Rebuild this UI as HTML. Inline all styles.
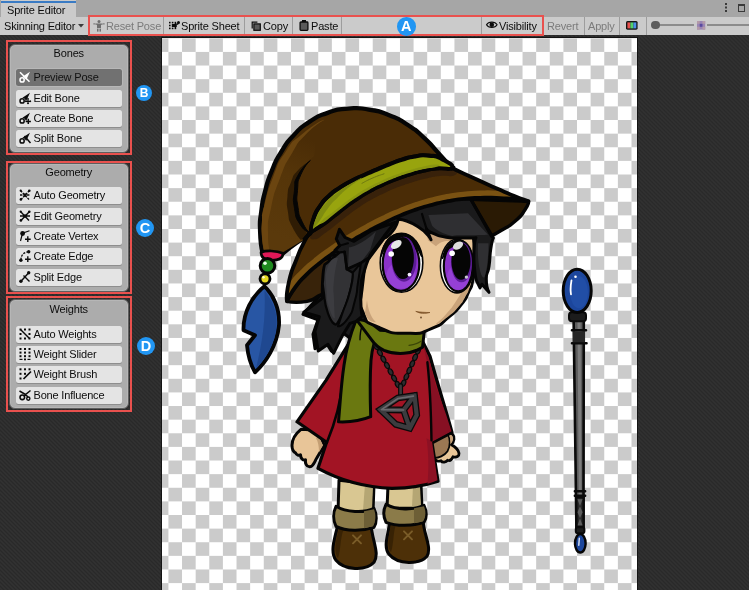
<!DOCTYPE html>
<html><head><meta charset="utf-8">
<style>
*{box-sizing:border-box;margin:0;padding:0}
html,body{width:749px;height:590px;overflow:hidden}
body{font-family:"Liberation Sans",sans-serif;font-size:11px;letter-spacing:-0.18px;color:#0c0c0c;position:relative;
 background:#2d2d2d repeating-linear-gradient(45deg,#292929 0,#323232 1.414px,#292929 2.828px);}
.abs{position:absolute}
#tabbar{left:0;top:0;width:749px;height:17px;background:#a6a6a6}
#tab{left:1px;top:0;width:75px;height:17px;background:#cbcbcb;}
#tab i{position:absolute;left:0;top:1px;width:75px;height:1.8px;background:#3a7bc4}
#tab span{position:absolute;left:5.5px;top:3.5px;line-height:13px}
#toolbar{left:0;top:16.9px;width:749px;height:18px;background:#cbcbcb}
.tb,.btn,.panel h4,#tab span,.badge{will-change:transform}
.tb{position:absolute;top:17.6px;height:17px;line-height:17px;white-space:nowrap}
.dis{color:#7b7b7b}
.sep{position:absolute;top:17px;width:1px;height:17.8px;background:#9d9d9d}
.red{position:absolute;border:2.1px solid #e9514e}
#canvas{left:162px;top:37.7px;width:475.3px;height:553px;background:#fff;overflow:hidden;box-shadow:0 0 0 1px #141414}
.panel{position:absolute;left:9px;width:119.5px;background:#acacac;border:1.6px solid #5e5e5e;border-radius:6px;box-shadow:inset 0 0 0 1px #b6b6b6}
.panel h4{font-weight:normal;font-size:11px;text-align:center;position:absolute;left:0;right:0;top:2.8px;line-height:13px}
.btn{position:absolute;left:16px;width:106px;height:16.8px;background:#e4e4e4;border-radius:2.5px;box-shadow:0 1px 0 #8e8e8e;line-height:16.6px;padding-left:17.5px;white-space:nowrap}
.btn.sel{background:#717171;box-shadow:0 0 0 1px #b7b7b7;color:#111}
.btn svg{position:absolute;left:2.6px;top:2.4px;width:12px;height:12px;overflow:visible}
.badge{position:absolute;border-radius:50%;background:#2196f3;color:#fff;font-weight:bold;text-align:center;letter-spacing:0}
svg.ic{position:absolute;overflow:visible}
</style></head><body>
<div id="tabbar" class="abs"></div>
<div id="tab" class="abs"><i></i><span>Sprite Editor</span></div>
<div id="toolbar" class="abs"></div>
<div class="tb" style="left:3.7px">Skinning Editor</div>
<svg class="ic" style="left:78px;top:24px" width="6" height="4" viewBox="0 0 6 4"><path d="M0 0 H6 L3 3.600 Z" fill="#3c3c3c"/></svg>
<svg class="ic" style="left:93px;top:19.800px" width="12" height="12" viewBox="0 0 12 12"><g fill="#6f6f6f"><circle cx="6" cy="1.600" r="1.500"/><rect x="0.300" y="3.400" width="2" height="1"/><rect x="9.700" y="3.400" width="2" height="1"/><path d="M2.500 3.600 H9.500 V4.800 H8 V8 H4 V4.800 H2.500 Z"/><rect x="4" y="8.600" width="1.500" height="3"/><rect x="6.500" y="8.600" width="1.500" height="3"/></g></svg>
<div class="tb dis" style="left:105.8px">Reset Pose</div>
<div class="sep" style="left:163px"></div>
<svg class="ic" style="left:169px;top:21.300px" width="11" height="9" viewBox="0 0 11 9"><g fill="#0c0c0c"><rect x="0" y="0.800" width="1.600" height="1.600"/><rect x="0" y="3.700" width="1.600" height="1.600"/><rect x="0" y="6.600" width="1.600" height="1.600"/><rect x="2.800" y="0.800" width="1.600" height="1.600"/><rect x="2.800" y="6.600" width="1.600" height="1.600"/><rect x="2.800" y="3" width="5" height="3"/><rect x="5.600" y="0.800" width="1.600" height="2.300"/><rect x="5.600" y="6" width="1.600" height="2.200"/><circle cx="9.500" cy="1.500" r="1.500"/><rect x="7.500" y="2.200" width="1.800" height="1.600"/></g></svg>
<div class="tb" style="left:181.2px">Sprite Sheet</div>
<div class="sep" style="left:244px"></div>
<svg class="ic" style="left:251px;top:20.800px" width="10" height="10" viewBox="0 0 10 10"><path d="M0.600 0.600 H6.400 V1.800 H1.800 V7.400 H0.600 Z" fill="#0c0c0c"/><rect x="2.900" y="2.900" width="6.400" height="6.400" fill="#5a5a5a" stroke="#0c0c0c" stroke-width="1.200"/></svg>
<div class="tb" style="left:263px">Copy</div>
<div class="sep" style="left:291.700px"></div>
<svg class="ic" style="left:298.500px;top:19.800px" width="10" height="11" viewBox="0 0 10 11"><rect x="3" y="0" width="4" height="2.400" fill="#0c0c0c"/><rect x="1.100" y="2" width="7.800" height="8.400" rx="0.800" fill="#5a5a5a" stroke="#0c0c0c" stroke-width="1.300"/></svg>
<div class="tb" style="left:310.600px">Paste</div>
<div class="sep" style="left:341px"></div>
<div class="sep" style="left:481.300px"></div>
<svg class="ic" style="left:486.300px;top:21.400px" width="11.600" height="7.600" viewBox="0 0 11.600 7.600"><path d="M0.500 3.800 C2.500 0.300 9.100 0.300 11.100 3.800 C9.100 7.300 2.500 7.300 0.500 3.800 Z" fill="#cbcbcb" stroke="#0c0c0c" stroke-width="1.100"/><circle cx="5.800" cy="3.800" r="2.300" fill="#0c0c0c"/></svg>
<div class="tb" style="left:499px">Visibility</div>
<div class="tb dis" style="left:546.800px">Revert</div>
<div class="sep" style="left:583.500px"></div>
<div class="tb dis" style="left:588px">Apply</div>
<div class="sep" style="left:619.200px"></div>
<svg class="ic" style="left:626.400px;top:20.800px" width="11.600" height="8.800" viewBox="0 0 11.600 8.800"><rect x="0" y="0" width="11.600" height="8.800" rx="1.500" fill="#141414"/><rect x="1.400" y="1.400" width="3" height="6" fill="#e8504e"/><rect x="4.400" y="1.400" width="3" height="6" fill="#4fd26a"/><rect x="7.400" y="1.400" width="2.900" height="6" fill="#4a8fe8"/></svg>
<div class="sep" style="left:646.300px"></div>
<div class="abs" style="left:656px;top:24.400px;width:37.500px;height:1.200px;background:#8c8c8c"></div><div class="abs" style="left:651.300px;top:20.800px;width:8.400px;height:8.400px;border-radius:50%;background:#5c5c5c"></div>
<svg class="ic" style="left:696.800px;top:20.800px" width="8.200" height="8.600" viewBox="0 0 8.200 8.600"><rect width="8.200" height="8.600" fill="#9a86b4"/><rect x="0" y="0" width="2.700" height="2.800" fill="#b49aa8"/><rect x="5.500" y="0" width="2.700" height="2.800" fill="#b49aa8"/><rect x="2.700" y="2.800" width="2.800" height="3" fill="#5a4aa0"/><rect x="0" y="5.800" width="2.700" height="2.800" fill="#b49aa8"/><rect x="5.500" y="5.800" width="2.700" height="2.800" fill="#b49aa8"/></svg>
<div class="abs" style="left:707.400px;top:24.400px;width:42px;height:1.200px;background:#8c8c8c"></div>
<div class="abs" style="left:724.900px;top:3.200px;width:1.700px;height:1.700px;background:#3a3a3a;box-shadow:0 3.500px 0 #3a3a3a,0 7px 0 #3a3a3a"></div>
<div class="abs" style="left:737.700px;top:3.600px;width:7.600px;height:8px;border:1px solid #3a3a3a;border-top-width:2.200px"></div>
<div class="red" style="left:88px;top:14.900px;width:456.200px;height:21.200px"></div>
<div class="badge" style="left:397.2px;top:16.7px;width:18.6px;height:18.6px;font-size:14.5px;line-height:19.1px">A</div>

<div id="canvas" class="abs">
<svg width="475.3" height="553" viewBox="162 37.7 475.3 553">
<defs><pattern id="chk" x="154.8" y="38" width="27.24" height="27.24" patternUnits="userSpaceOnUse">
<rect width="27.24" height="27.24" fill="#fff"/><rect width="13.62" height="13.62" fill="#cbcbcb"/><rect x="13.62" y="13.62" width="13.62" height="13.62" fill="#cbcbcb"/></pattern></defs>
<rect x="162" y="37" width="476" height="554" fill="url(#chk)"/>
<g id="char" stroke-linejoin="round" stroke-linecap="round">
<linearGradient id="tailg" gradientUnits="userSpaceOnUse" x1="275" y1="235" x2="312" y2="140"><stop offset="0" stop-color="#5a390b"/><stop offset="0.6" stop-color="#553509"/><stop offset="1" stop-color="#4a2c06"/></linearGradient>
<!--staff--><!-- staff -->
<g id="staff">
<path d="M573.6 318 L583.8 318 L583.5 528 L576.4 528 Z" fill="#5c5c5c" stroke="#0a0a0a" stroke-width="2.6"/>
<path d="M577.5 322 L580.5 322 L581.6 496 L578.8 496 Z" fill="#7c7c7c"/>
<path d="M576.2 497 L583.6 497 L583.6 527 L576.5 527 Z" fill="#2a2a2a" stroke="#0a0a0a" stroke-width="2.4"/>
<path d="M577.500 499 L582.500 499 L580 506 Z M580 506 L582.600 512 L580 518 L577.500 512 Z M580 518 L582.500 525 L577.600 525 Z" fill="#5d5d5d"/>
<rect x="569" y="312" width="17" height="9" rx="3" fill="#1c1c1c" stroke="#0a0a0a" stroke-width="2"/>
<path d="M572 330 H586 M572 343 H586.5" stroke="#0a0a0a" stroke-width="2.6" fill="none"/>
<rect x="573" y="331" width="12" height="11" fill="#262626"/>
<path d="M574.8 491 H585.2 M574.8 495.5 H585.2" stroke="#0a0a0a" stroke-width="2.4" fill="none"/>
<rect x="575.8" y="527" width="8.600" height="6" rx="2" fill="#1c1c1c" stroke="#0a0a0a" stroke-width="2"/>
<ellipse cx="577.2" cy="290.5" rx="14" ry="21.6" fill="#1c469c" stroke="#060606" stroke-width="3"/>
<ellipse cx="579" cy="292" rx="9" ry="16" fill="#2553ae" opacity=".6"/>
<path d="M571.5 280 Q570 288 571 294" stroke="#fff" stroke-width="1.8" fill="none"/>
<circle cx="575.5" cy="276.5" r="1.3" fill="#fff"/>
<ellipse cx="580.3" cy="543" rx="5.3" ry="9.2" fill="#1c469c" stroke="#060606" stroke-width="2.4"/>
<path d="M579.3 538 L578.8 545" stroke="#dfe6f5" stroke-width="1.4"/>
</g>


<path d="M330 255 L321 294 L303 314 L318 319.5 L313 334 L315 348.5 L325 341 L331.5 351 L341 331 L350 338 L366 322 L380 300 L380 250 L330 255 Z" fill="#1a1a1b" stroke="#050505" stroke-width="3"/>
<path d="M528.5 201 C528.5 201 529.5 202.8 525 209.5 C520.5 216.2 522.8 214.2 515 221 C507.2 227.8 509.5 225.2 501.5 230 C493.5 234.8 491 235.5 491 235.5 L440 240 L420 215 L440 198 L528.5 201 Z" fill="#2a1a04" stroke="#050505" stroke-width="3.4"/>
<!--feather--><!-- feather -->
<path id="feather" d="M264.5 286 C252 296 243 312 243.5 330 L255 335 L247 345 C248 356 251 365 255 372 C266 362 277 345 279 325 C280 308 273 294 264.5 286 Z" fill="#2856a4" stroke="#050505" stroke-width="3.8"/>
<path d="M264.5 290 C272 300 278 312 276.5 326 C275 344 266 358 256 368 C262 345 266 318 264.5 290 Z" fill="#1f4890"/>


<!--body--><!-- legs -->
<path d="M339 480 L374 484 L373 512 L338 512 Z" fill="#d9c792" stroke="#050505" stroke-width="3"/>
<path d="M365 484 L373 485 L372 510 L363 510 Z" fill="#b5a674"/>
<path d="M388 486 L421 484 L422 508 L387 508 Z" fill="#d9c792" stroke="#050505" stroke-width="3"/>
<path d="M413 486 L420 486 L421 506 L412 506 Z" fill="#b5a674"/>
<!-- boots -->
<path d="M338 524 C334 540 330 552 336 560 C344 570 366 571 374 562 C380 553 372 540 371 524 Z" fill="#4d3008" stroke="#050505" stroke-width="3"/>
<path d="M390 520 C388 536 383 546 389 554 C398 565 420 564 427 556 C432 547 424 535 423 520 Z" fill="#4d3008" stroke="#050505" stroke-width="3"/>
<path d="M339 528 C336 540 333 551 338 558 C341 548 340 538 344 528 Z" fill="#382204"/>
<path d="M391 524 C389 536 386 546 391 552 C394 542 393 532 396 524 Z" fill="#382204"/>
<path d="M353 535 L361 543 M361 535 L353 543 M404 531 L412 539 M412 531 L404 539" stroke="#7a5c28" stroke-width="1.900" fill="none"/>
<!-- cuffs -->
<path d="M336 506 C346 512 364 513 374 508 C377 514 377 522 374 527 C362 531 346 531 336 526 C333 520 333 512 336 506 Z" fill="#8b7b49" stroke="#050505" stroke-width="3"/>
<path d="M364 511 L374 509 C376 514 376 521 373 526 L364 528 Z" fill="#6d5f36"/>
<path d="M386 504 C396 510 414 510 424 505 C427 511 427 518 424 522 C412 526 396 526 386 522 C383 516 383 510 386 504 Z" fill="#8b7b49" stroke="#050505" stroke-width="3"/>
<path d="M414 508 L424 506 C426 511 426 517 423 521 L414 523 Z" fill="#6d5f36"/>

<!-- hands -->
<path d="M301 429 C296 433 292 439 292 445 C292 449 293 451.500 295.500 452.500 C296.500 455 299 455.500 300.500 454.500 C300.500 458 303 460.500 305.500 459.500 C305 463 306.500 466.500 309.500 466.500 C312 466.500 313.500 464 314.500 462 C317 457 320.500 451.500 324.500 445 L318 430 Z" fill="#e8c598" stroke="#050505" stroke-width="3"/><path d="M318 436 L323 445 L319 452 C319 446 318 441 316 438 Z" fill="#c49f74"/>
<path d="M448 433 C452 432 454.500 435 454 439 C453.500 441.500 452.500 443.500 451.500 444.500 C455 446.500 458.500 450 459 453 C459.300 456 456.500 457.500 453 456.500 C452 459 450 461 447.500 460 C446 462 442.500 462.500 441 460.500 C438.500 461.500 435.500 460.500 434.500 458 L431 441 Z" fill="#e9c698" stroke="#050505" stroke-width="2.800"/>
<path d="M431.500 441 C437 440 444 436.500 447.500 433.500 C450.500 438 450.500 446 447.500 451 C444.500 455.500 438.500 458 433.500 457.500 Z" fill="#9b7753" stroke="#050505" stroke-width="1.800"/>
<path d="M449 434.500 C452 434 453.500 436.500 453 439.500 C452.500 441.500 451.500 443 450.500 443.800 C450.500 440 450 437 449 434.500 Z" fill="#c9a37a"/>
<!-- dress -->
<path id="dress" d="M352 338 L326 380 L297 421.5 L326.6 442 L318 468 C340 480 366 487 392 488 C410 488 426 485 438 481 L432 442.5 L452 432 C446 410 438 385 430 356 L422 340 Z" fill="#a21424" stroke="#050505" stroke-width="3.2"/>
<path d="M423 343 L430 362 L436 386 L446 414 L451.500 431 L432 441.500 C431.500 415 430 388 427 362 Z" fill="#871023"/><path d="M432 441 L437.500 480 C434 481.500 431 482.500 427.500 483.500 C429 468 428.500 452 426.500 438 Z" fill="#8c1124"/>
<path d="M427.4 362 C430 385 431 410 431.5 440" stroke="#050505" stroke-width="2.4" fill="none"/>
<path d="M343 380 C341 400 334 425 327 442" stroke="#050505" stroke-width="2.6" fill="none"/>

<!-- scarf hanging -->
<path d="M356 320 C350 335 346 350 344 365 C341 385 340 405 338.5 421.5 C350 422 362 420 370.7 416.4 C370 395 370 375 371 360 C372 348 375 338 380 330 Z" fill="#6a7810" stroke="#050505" stroke-width="3"/>
<path d="M362 326 C360.500 330 360 335 360 339.500" stroke="#050505" stroke-width="1.400" fill="none"/>
<!-- necklace -->
<path d="M375.5 345 L399 387 M419 349 L402.500 385" stroke="#0a0a0a" stroke-width="1.6" fill="none"/>
<ellipse cx="376.3" cy="346.2" rx="3.3" ry="2.1" transform="rotate(61 376.3 346.2)" fill="#2c2c2e" stroke="#0a0a0a" stroke-width="1.2"/>
<ellipse cx="379.9" cy="352.5" rx="3.3" ry="2.1" transform="rotate(61 379.9 352.5)" fill="#2c2c2e" stroke="#0a0a0a" stroke-width="1.2"/>
<ellipse cx="383.4" cy="358.9" rx="3.3" ry="2.1" transform="rotate(61 383.4 358.9)" fill="#2c2c2e" stroke="#0a0a0a" stroke-width="1.2"/>
<ellipse cx="387.0" cy="365.2" rx="3.3" ry="2.1" transform="rotate(61 387.0 365.2)" fill="#2c2c2e" stroke="#0a0a0a" stroke-width="1.2"/>
<ellipse cx="390.6" cy="371.6" rx="3.3" ry="2.1" transform="rotate(61 390.6 371.6)" fill="#2c2c2e" stroke="#0a0a0a" stroke-width="1.2"/>
<ellipse cx="394.1" cy="378.0" rx="3.3" ry="2.1" transform="rotate(61 394.1 378.0)" fill="#2c2c2e" stroke="#0a0a0a" stroke-width="1.2"/>
<ellipse cx="397.7" cy="384.3" rx="3.3" ry="2.1" transform="rotate(61 397.7 384.3)" fill="#2c2c2e" stroke="#0a0a0a" stroke-width="1.2"/>
<ellipse cx="418.0" cy="350.7" rx="3.3" ry="2.1" transform="rotate(114 418.0 350.7)" fill="#2c2c2e" stroke="#0a0a0a" stroke-width="1.2"/>
<ellipse cx="415.1" cy="357.1" rx="3.3" ry="2.1" transform="rotate(114 415.1 357.1)" fill="#2c2c2e" stroke="#0a0a0a" stroke-width="1.2"/>
<ellipse cx="412.2" cy="363.5" rx="3.3" ry="2.1" transform="rotate(114 412.2 363.5)" fill="#2c2c2e" stroke="#0a0a0a" stroke-width="1.2"/>
<ellipse cx="409.3" cy="370.0" rx="3.3" ry="2.1" transform="rotate(114 409.3 370.0)" fill="#2c2c2e" stroke="#0a0a0a" stroke-width="1.2"/>
<ellipse cx="406.4" cy="376.4" rx="3.3" ry="2.1" transform="rotate(114 406.4 376.4)" fill="#2c2c2e" stroke="#0a0a0a" stroke-width="1.2"/>
<ellipse cx="403.5" cy="382.8" rx="3.3" ry="2.1" transform="rotate(114 403.5 382.8)" fill="#2c2c2e" stroke="#0a0a0a" stroke-width="1.2"/>
<!-- pendant -->
<g id="pendant" stroke-linejoin="miter">
<path d="M400.6 385 L400.6 396" stroke="#0a0a0a" stroke-width="5"/><path d="M400.6 385.500 L400.6 395" stroke="#3a3a3c" stroke-width="2.6"/>
<path d="M380.4 409.3 L397.9 397.7 L414.5 395.3 L416.7 414.7 L409.8 427.9 L395.9 424.1 Z M403.6 409.7 L380.4 409.3 M403.6 409.7 L414.5 395.3 M403.6 409.7 L409.8 427.9" fill="none" stroke="#0a0a0a" stroke-width="6.8"/>
<path d="M380.4 409.3 L397.9 397.7 L414.5 395.3 L416.7 414.7 L409.8 427.9 L395.9 424.1 Z M403.6 409.7 L380.4 409.3 M403.6 409.7 L414.5 395.3 M403.6 409.7 L409.8 427.9" fill="none" stroke="#3c3c3f" stroke-width="4.200"/>
<path d="M381.4 409.3 L397.9 398.2 L413.5 395.8 M403.6 409.7 L382.4 409.3" fill="none" stroke="#6a6a6e" stroke-width="1.600"/>
</g>
<!-- scarf neck -->
<path d="M357 320 C362 318 372 322 380 330 C395 331 410 331 424.500 329 L422.500 347 C412 354 396 355 384 350 C378 347 374 343 372 340 Z" fill="#6a7810" stroke="#050505" stroke-width="3"/>

<path d="M409 345 C414 344.500 418 343 421 341" stroke="#3a4408" stroke-width="1.200" fill="none"/>

<path d="M372 226 C372 226 365.5 256.3 362.5 285 C359.5 313.7 357.5 298 363 312 C368.5 326 364 320 379 327 C394 334 390.3 332.7 408 333 C425.7 333.3 418.3 333.5 432 328 C445.7 322.5 439.2 324.5 449 316.5 C458.8 308.5 455 312.2 461.5 304 C468 295.8 464.7 300 468.5 292 C472.3 284 470.8 290 472.8 280 C474.8 270 474.4 278 474.5 262 C474.6 246 473 232 473 232 L420 208 L395 208 L372 226 Z" fill="#e9c699" stroke="#050505" stroke-width="3"/>
<path d="M473 272 C473 272 472.7 277.7 470 286 C467.3 294.3 468.7 290.3 465 297 C461.3 303.7 464.7 299.5 459 306 C453.3 312.5 455.7 310.5 448 316.5 C440.3 322.5 436.7 324.8 436 324 C435.3 323.2 439.3 321.7 446 314 C452.7 306.3 450.3 309.7 456 301 C461.7 292.3 459 296.7 463 288 C467 279.3 464.7 280.3 468 275 C471.3 269.7 473 272 473 272 Z" fill="#c9a37a"/>
<path d="M367 300 C368 308 370 316 376 322 C370 322 366 318 365 312 Z" fill="#c9a37a"/>
<path d="M416.2 311.2 C420 313.6 425 313.4 430 312.2 C425 312.2 420 311.8 416.2 311.2 Z" fill="#7d5226" stroke="#7d5226" stroke-width="0.7"/><circle cx="421" cy="317.2" r="0.9" fill="#6b4a2a"/>
<!--eyes--><g id="eyes">
<path d="M426 231 L448 231 L452 241 C446 240 440 241 436 246 L428 240 Z" fill="#c9a37a"/>
<ellipse cx="401.5" cy="262.5" rx="21.3" ry="29.5" fill="#fff" stroke="#050505" stroke-width="1.6"/>
<ellipse cx="401" cy="263.6" rx="18.3" ry="27" fill="#8a32c8" stroke="#050505" stroke-width="2.2"/>
<path d="M381 256 C384 240 392 233.500 401 233.500 C411 233.500 419 241 421.500 256 C417 244 410 239 401 239 C392 239 385 245 381 256 Z" fill="#050505" stroke="#050505" stroke-width="1.5"/>
<ellipse cx="401" cy="275" rx="14.5" ry="13.5" fill="#9d4ade" opacity=".6"/>
<ellipse cx="404" cy="259" rx="12.5" ry="22.5" fill="#5c1c96"/>
<ellipse cx="402.900" cy="257.700" rx="11" ry="21" fill="#050505"/>
<ellipse cx="396.300" cy="244.200" rx="6" ry="3.6" transform="rotate(-35 396.300 244.200)" fill="#e6e6e6"/>
<circle cx="391.200" cy="253.700" r="2.800" fill="#fff"/>
<circle cx="409.500" cy="274.300" r="1.900" fill="#f4ecff"/>
<ellipse cx="457" cy="265.800" rx="16.600" ry="26.800" fill="#fff" stroke="#050505" stroke-width="1.6"/>
<ellipse cx="458.200" cy="266" rx="14.400" ry="25" fill="#8a32c8" stroke="#050505" stroke-width="2.200"/>
<path d="M442.500 258 C445 246 451 240 458 240 C466 240 471 246 473 258 C470 249 465 245 458 245 C451 245 446 249 442.500 258 Z" fill="#050505" stroke="#050505" stroke-width="1.500"/>
<ellipse cx="458" cy="277" rx="11" ry="12.5" fill="#9d4ade" opacity=".6"/>
<ellipse cx="461.500" cy="262" rx="10.500" ry="20" fill="#5c1c96"/>
<ellipse cx="461" cy="261" rx="9.500" ry="18.500" fill="#050505"/>
<ellipse cx="458" cy="245.300" rx="5.500" ry="3.500" transform="rotate(-30 458 245.300)" fill="#dcdcdc"/>
<circle cx="452.100" cy="253" r="2.800" fill="#fff"/>
<circle cx="466.400" cy="276.800" r="1.700" fill="#c8c8d0"/>
</g>

<path d="M360 226 L369 258 L384 238 C384 238 388.1 236.9 392.8 230.6 C397.5 224.3 398 219 398 219 C398 219 406.7 219.4 417.7 226.2 C428.7 233 431 239.5 431 239.5 L426.6 228.8 C426.6 228.8 427.3 230.6 433.8 233.3 C440.3 236 436.1 235.4 446.2 236.9 C456.3 238.4 454.1 237.5 464 237.7 C473.9 237.9 476 237.5 476 237.5 C476 237.5 474.4 239.2 474 250 C473.6 260.8 473.6 259 474.7 269.8 C475.8 280.6 477.4 282.3 477.4 282.3 L480 287.6 L481.9 284 L489 292 C489 292 486.3 287.3 486.3 278.7 C486.3 270.1 487.5 276.3 489 266.2 C490.5 256.1 489.3 257.9 490.8 248.4 C492.3 238.9 493.4 237.7 493.4 237.7 L470.8 199 L400 196 L360 226 Z" fill="#1a1a1b" stroke="#050505" stroke-width="3"/>
<path d="M428.4 214.6 L468 213 L488 234.5 C488 234.5 475.9 235.2 462 235 C448.1 234.8 456.2 237.2 446.2 234 C436.2 230.8 432 225.3 432 225.3 L428.4 214.6 Z" fill="#2f2f32"/>
<path d="M478 243 L488.5 243 C488.5 243 488.8 250.7 487.5 262 C486.2 273.3 484.5 277 484.5 277 C484.5 277 481.7 279.3 479.5 268 C477.3 256.7 478 243 478 243 Z" fill="#2f2f32"/>
<path d="M470.8 199 L491.5 236" stroke="#050505" stroke-width="3" fill="none"/>
<path d="M422 213.7 L426.6 228.8" stroke="#050505" stroke-width="2.200" fill="none"/>
<path d="M287 301 C287 301 288.3 296.5 295 287.5 C301.7 278.5 297.5 283.3 307 274 C316.5 264.7 315.7 263.5 323.4 259.5 C331.1 255.5 330 262 330 262 L326 296 C326 296 327 292.8 320.7 294.5 C314.4 296.2 318.2 298.8 307 301 C295.8 303.2 287 301 287 301 Z" fill="#38230a" stroke="#050505" stroke-width="3.4"/>
<clipPath id="bc"><path d="M311 231.5 C315.7 228.4 315.4 229.4 323.2 224.1 C331 218.7 326.9 221.2 334.4 215.4 C341.9 209.6 338 212.3 345.6 206.6 C353.2 200.9 349.3 203.6 357.2 198.4 C365.2 193.2 361.1 195.6 369.5 191 C377.8 186.4 373.6 188.6 382.3 184.6 C391 180.6 386.6 182.4 395.5 179 C404.4 175.7 400 177.2 409 174.4 C418 171.6 413.5 172.7 422.6 170.6 C431.8 168.6 427 169.2 436.5 168.1 C446 167.1 445.8 167.7 451 167.5 C456.2 167.3 452 167.5 452 167.5 C452 167.5 456 169.7 470.8 176.5 C485.6 183.3 481.6 181.5 496.3 188 C511 194.5 504.3 191.7 515 196 C525.7 200.3 528.5 201 528.5 201 C528.5 201 523.3 199.9 512.6 198.8 C501.9 197.7 507.2 198 496.4 197.6 C485.6 197.2 491 197.2 480.1 197.5 C469.3 197.9 474.6 197.5 463.9 198.6 C453.1 199.8 458.5 199 447.8 200.9 C437.2 202.9 442.5 201.7 432.1 204.5 C421.7 207.2 426.8 205.7 416.6 209.1 C406.5 212.5 411.5 210.7 401.6 214.8 C391.6 218.9 396.5 216.7 386.8 221.4 C377.1 226 381.9 223.6 372.4 228.7 C362.9 233.8 367.6 231.2 358.2 236.7 C348.9 242.2 353.5 239.4 344.4 245.3 C335.3 251.2 339.7 248.1 330.9 254.4 C322.1 260.7 326.3 257.3 318 264.2 C309.7 271 313.5 267.3 305.9 274.8 C298.4 282.4 301.7 278.2 295.3 286.9 C289 295.6 287 301 287 301 C287 301 285.8 295 289 281 C292.2 267 291.8 271.3 296.5 259 C301.2 246.7 298.8 252.5 303 244 C307.2 235.5 306.3 237.7 309 233.5 C311.7 229.3 306.3 234.6 311 231.5 Z" fill="#000"/></clipPath>
<path d="M311 231.5 C315.7 228.4 315.4 229.4 323.2 224.1 C331 218.7 326.9 221.2 334.4 215.4 C341.9 209.6 338 212.3 345.6 206.6 C353.2 200.9 349.3 203.6 357.2 198.4 C365.2 193.2 361.1 195.6 369.5 191 C377.8 186.4 373.6 188.6 382.3 184.6 C391 180.6 386.6 182.4 395.5 179 C404.4 175.7 400 177.2 409 174.4 C418 171.6 413.5 172.7 422.6 170.6 C431.8 168.6 427 169.2 436.5 168.1 C446 167.1 445.8 167.7 451 167.5 C456.2 167.3 452 167.5 452 167.5 C452 167.5 456 169.7 470.8 176.5 C485.6 183.3 481.6 181.5 496.3 188 C511 194.5 504.3 191.7 515 196 C525.7 200.3 528.5 201 528.5 201 C528.5 201 523.3 199.9 512.6 198.8 C501.9 197.7 507.2 198 496.4 197.6 C485.6 197.2 491 197.2 480.1 197.5 C469.3 197.9 474.6 197.5 463.9 198.6 C453.1 199.8 458.5 199 447.8 200.9 C437.2 202.9 442.5 201.7 432.1 204.5 C421.7 207.2 426.8 205.7 416.6 209.1 C406.5 212.5 411.5 210.7 401.6 214.8 C391.6 218.9 396.5 216.7 386.8 221.4 C377.1 226 381.9 223.6 372.4 228.7 C362.9 233.8 367.6 231.2 358.2 236.7 C348.9 242.2 353.5 239.4 344.4 245.3 C335.3 251.2 339.7 248.1 330.9 254.4 C322.1 260.7 326.3 257.3 318 264.2 C309.7 271 313.5 267.3 305.9 274.8 C298.4 282.4 301.7 278.2 295.3 286.9 C289 295.6 287 301 287 301 C287 301 285.8 295 289 281 C292.2 267 291.8 271.3 296.5 259 C301.2 246.7 298.8 252.5 303 244 C307.2 235.5 306.3 237.7 309 233.5 C311.7 229.3 306.3 234.6 311 231.5 Z" fill="#4a2c06"/>
<path d="M312 233 C315.2 228.5 316.4 230.9 324.2 225.6 C332 220.2 327.9 222.7 335.4 216.9 C342.9 211.1 339 213.8 346.6 208.1 C354.2 202.4 350.3 205.1 358.2 199.9 C366.2 194.7 362.1 197.1 370.5 192.5 C378.8 187.9 374.6 190.1 383.3 186.1 C392 182.1 387.6 183.9 396.5 180.5 C405.4 177.2 401 178.7 410 175.9 C419 173.1 414.5 174.2 423.6 172.1 C432.8 170.1 428 170.7 437.5 169.6 C447 168.6 446.3 167.2 452 169 C457.7 170.8 458.5 172.8 454.5 175 C450.5 177.2 449.5 174.6 440 175.6 C430.5 176.7 435.3 176.1 426.1 178.1 C417 180.2 421.5 179.1 412.5 181.9 C403.5 184.7 407.9 183.2 399 186.5 C390.1 189.9 394.5 188.1 385.8 192.1 C377.1 196.1 381.3 193.9 373 198.5 C364.6 203.1 368.7 200.7 360.7 205.9 C352.8 211.1 356.7 208.4 349.1 214.1 C341.5 219.8 345.4 217.1 337.9 222.9 C330.4 228.7 334.5 226.2 326.7 231.6 C318.9 236.9 319.4 238.5 314.5 239 C309.6 239.5 308.8 237.5 312 233 Z" fill="#38210a"/>
<g clip-path="url(#bc)"><path d="M528.5 201 C523.2 200.3 523.3 199.9 512.6 198.8 C501.9 197.7 507.2 198 496.4 197.6 C485.6 197.2 491 197.2 480.1 197.5 C469.3 197.9 474.6 197.5 463.9 198.6 C453.1 199.8 458.5 199 447.8 200.9 C437.2 202.9 442.5 201.7 432.1 204.5 C421.7 207.2 426.8 205.7 416.6 209.1 C406.5 212.5 411.5 210.7 401.6 214.8 C391.6 218.9 396.5 216.7 386.8 221.4 C377.1 226 381.9 223.6 372.4 228.7 C362.9 233.8 367.6 231.2 358.2 236.7 C348.9 242.2 353.5 239.4 344.4 245.3 C335.3 251.2 339.7 248.1 330.9 254.4 C322.1 260.7 326.3 257.3 318 264.2 C309.7 271 313.5 267.3 305.9 274.8 C298.4 282.4 301.7 278.2 295.3 286.9 C289 295.6 289.8 296.3 287 301" fill="none" stroke="#7a5212" stroke-width="14.5"/></g>
<path d="M311 231.5 C315.7 228.4 315.4 229.4 323.2 224.1 C331 218.7 326.9 221.2 334.4 215.4 C341.9 209.6 338 212.3 345.6 206.6 C353.2 200.9 349.3 203.6 357.2 198.4 C365.2 193.2 361.1 195.6 369.5 191 C377.8 186.4 373.6 188.6 382.3 184.6 C391 180.6 386.6 182.4 395.5 179 C404.4 175.7 400 177.2 409 174.4 C418 171.6 413.5 172.7 422.6 170.6 C431.8 168.6 427 169.2 436.5 168.1 C446 167.1 445.8 167.7 451 167.5 C456.2 167.3 452 167.5 452 167.5 C452 167.5 456 169.7 470.8 176.5 C485.6 183.3 481.6 181.5 496.3 188 C511 194.5 504.3 191.7 515 196 C525.7 200.3 528.5 201 528.5 201 C528.5 201 523.3 199.9 512.6 198.8 C501.9 197.7 507.2 198 496.4 197.6 C485.6 197.2 491 197.2 480.1 197.5 C469.3 197.9 474.6 197.5 463.9 198.6 C453.1 199.8 458.5 199 447.8 200.9 C437.2 202.9 442.5 201.7 432.1 204.5 C421.7 207.2 426.8 205.7 416.6 209.1 C406.5 212.5 411.5 210.7 401.6 214.8 C391.6 218.9 396.5 216.7 386.8 221.4 C377.1 226 381.9 223.6 372.4 228.7 C362.9 233.8 367.6 231.2 358.2 236.7 C348.9 242.2 353.5 239.4 344.4 245.3 C335.3 251.2 339.7 248.1 330.9 254.4 C322.1 260.7 326.3 257.3 318 264.2 C309.7 271 313.5 267.3 305.9 274.8 C298.4 282.4 301.7 278.2 295.3 286.9 C289 295.6 287 301 287 301 C287 301 285.8 295 289 281 C292.2 267 291.8 271.3 296.5 259 C301.2 246.7 298.8 252.5 303 244 C307.2 235.5 306.3 237.7 309 233.5 C311.7 229.3 306.3 234.6 311 231.5 Z" fill="none" stroke="#050505" stroke-width="3.8"/>
<path d="M262.5 252 C262.5 252 260.5 244.8 260.1 231.1 C259.7 217.4 259.6 224.4 261.3 210.9 C263 197.4 261.8 204 265.2 190.6 C268.7 177.2 266.5 183.6 271.8 170.6 C277.1 157.6 273.9 163.5 281.2 151.7 C288.5 139.8 284.3 145 293.7 135 C303 125 298 129.1 309.3 121.6 C320.6 114.2 314.8 117 327.6 112.6 C340.5 108.2 334.1 109.5 347.8 108.4 C361.6 107.3 355 107.1 368.8 109.3 C382.6 111.5 376.2 109.8 389.2 115 C402.2 120.1 396.3 117.2 407.9 124.7 C419.5 132.2 414 128.4 424.1 137.6 C434.1 146.8 428.8 142.2 438.1 152.3 C447.4 162.5 452 168 452 168 C452 168 449.3 162.8 441.5 158.6 C433.7 154.4 437.4 156.2 428.5 155.4 C419.7 154.6 423.9 154.8 415 156.2 C406.1 157.6 410.5 156.9 401.8 159.6 C393.1 162.3 397.4 161 388.9 164.3 C380.5 167.6 384.7 165.9 376.4 169.5 C368 173 372.2 171.2 364 174.9 C355.7 178.7 359.7 176.6 351.7 180.7 C343.7 184.9 347.4 182.5 339.8 187.5 C332.3 192.5 335.6 189.5 329 195.7 C322.4 201.9 325.1 198.5 320 206 C314.9 213.6 316.7 209.8 313.7 218.3 C310.7 226.8 311 231.5 311 231.5 L307 236 C307 236 304 237.3 296 243 C288 248.7 283 253 283 253 L262.5 252 Z" fill="#4a2c06" stroke="#050505" stroke-width="4.3"/>
<path d="M264 250 C264 250 260.7 240.3 262 222 C263.3 203.7 262 214 268 195 C274 176 270.7 182.3 280 165 C289.3 147.7 285.3 154 296 143 C306.7 132 306 127.7 312 132 C318 136.3 314 156 314 156 C314 156 307 160 300 172 C293 184 295.3 178.7 293 192 C290.7 205.3 291 199.3 293 212 C295 224.7 295.7 220.7 299 230 C302.3 239.3 303 240 303 240 L283 252 L264 250 Z" fill="url(#tailg)"/>
<path d="M264 250 C264 250 262.7 246 262 236 C261.3 226 261.3 229.7 262 220 C262.7 210.3 260.3 221.3 264 207 C267.7 192.7 265.7 195.7 273 177 C280.3 158.3 276.3 165.3 286 151 C295.7 136.7 289.3 144.5 302 134 C314.7 123.5 322.7 119.5 324 119.5 C325.3 119.5 316.7 122.8 306 134 C295.3 145.2 300.7 138.3 292 153 C283.3 167.7 287 159.7 280 178 C273 196.3 275 190 271 208 C267 226 268.3 217.7 268 232 C267.7 246.3 270 251 270 251 L264 250 Z" fill="#6b4510"/>
<path d="M310 161 C310 161 305.5 164.3 301 172 C296.5 179.7 298.5 175.3 296.5 184 C294.5 192.7 294.8 188.7 295 198 C295.2 207.3 295 203.7 297 212 C299 220.3 297.7 216 301 223 C304.3 230 307 233 307 233 L301 240 C301 240 296.3 235.3 292 226 C287.7 216.7 289.5 222 288 212 C286.5 202 286.5 206 287.5 196 C288.5 186 287.5 190.7 291 182 C294.5 173.3 291.7 177 298 170 C304.3 163 310 161 310 161 Z" fill="#2f1c04"/>
<path d="M310 160.5 C310 160.5 305.2 164.2 301 174 C296.8 183.8 298.5 179 297.5 190 C296.5 201 296.5 196.7 298 207 C299.5 217.3 298.3 212.7 302 221 C305.7 229.3 309 232 309 232 C309 232 304.8 232 300 224 C295.2 216 296.3 219.3 294.5 208 C292.7 196.7 293.3 201 294.5 190 C295.7 179 292.8 184.8 298 175 C303.2 165.2 310 160.5 310 160.5 Z" fill="#050505" stroke="#050505" stroke-width="1"/>
<path d="M311 231.5 C311.9 227.1 310.7 226.8 313.7 218.3 C316.7 209.8 314.9 213.6 320 206 C325.1 198.5 322.4 201.9 329 195.7 C335.6 189.5 332.3 192.5 339.8 187.5 C347.4 182.5 343.7 184.9 351.7 180.7 C359.7 176.6 355.7 178.7 364 174.9 C372.2 171.2 368 173 376.4 169.5 C384.7 165.9 380.5 167.6 388.9 164.3 C397.4 161 393.1 162.3 401.8 159.6 C410.5 156.9 406.1 157.6 415 156.2 C423.9 154.8 419.7 154.6 428.5 155.4 C437.4 156.2 433.7 154.6 441.5 158.6 C449.3 162.7 453.7 164.3 452 167.5 C450.3 170.7 446.3 167.1 436.5 168.1 C426.7 169.2 431.8 168.6 422.6 170.6 C413.5 172.7 418 171.6 409 174.4 C400 177.2 404.4 175.7 395.5 179 C386.6 182.4 391 180.6 382.3 184.6 C373.6 188.6 377.8 186.4 369.5 191 C361.1 195.6 365.2 193.2 357.2 198.4 C349.3 203.6 353.2 200.9 345.6 206.6 C338 212.3 341.9 209.6 334.4 215.4 C326.9 221.2 331 218.7 323.2 224.1 C315.4 229.4 315.1 229 311 231.5 C306.9 234 310.1 235.9 311 231.5 Z" fill="#98a40e" stroke="#050505" stroke-width="4"/>
<path d="M313 229 C313 229 312.3 225.2 317 216 C321.7 206.8 320 209.5 327 201.5 C334 193.5 330.7 197.7 338 192 C345.3 186.3 341 189.3 349 184.5 C357 179.7 362 176.7 362 177.5 C362 178.3 357 180.5 349 187 C341 193.5 345 190 338 197 C331 204 334 200.3 328 208 C322 215.7 325 213 320 220 C315 227 313 229 313 229 Z" fill="#7f8c10"/>
<path d="M323.2 222.5 C327.2 220.4 326.9 219.6 334.4 213.8 C341.9 208 338 210.7 345.6 205 C353.2 199.3 349.3 202 357.2 196.8 C365.2 191.6 361.1 194 369.5 189.4 C377.8 184.8 373.6 187 382.3 183 C391 179 386.6 180.8 395.5 177.4 C404.4 174.1 400 175.6 409 172.8 C418 170 413.5 171.1 422.6 169 C431.8 167 432.2 168.2 436.5 166.5 C440.8 164.9 440.5 164.1 435.5 164.1 C430.5 164.2 430.8 164.6 421.6 166.6 C412.5 168.7 417 167.6 408 170.4 C399 173.2 403.4 171.7 394.5 175 C385.6 178.4 390 176.6 381.3 180.6 C372.6 184.6 376.8 182.4 368.5 187 C360.1 191.6 364.2 189.2 356.2 194.4 C348.3 199.6 352.2 196.9 344.6 202.6 C337 208.3 340.9 205.6 333.4 211.4 C325.9 217.2 325.6 216.4 322.2 220.1 C318.8 223.8 319.1 224.6 323.2 222.5 Z" fill="#8a9610"/>
<path d="M362 183 C365.3 181.3 364.7 181.2 372 178 C379.3 174.8 380 175 384 173.5" fill="none" stroke="#6a7510" stroke-width="1"/>
<path d="M339.5 229 L336.3 238.6 L339.7 245.3 L335 250 L339.7 253.5 L324.8 264.5 C324.8 264.5 323.4 267.9 322.7 279 C322 290.1 322.6 297.8 322.6 297.8 L303.8 312 L319.3 316.5 L314.9 331 L318.2 350.7 L328 344 L333.6 353 L342.4 335.3 L350 323 L356 321 L362 316 C362 316 360.2 305.3 361 290 C361.8 274.7 360.8 282.7 364.5 270 C368.2 257.3 372 252 372 252 L384 236 L395 222 L372 230 L354 241 L345 237 L339.5 229 Z" fill="#1a1a1b" stroke="#050505" stroke-width="3"/>
<path d="M340 252 L324.8 264.7 C324.8 264.7 323.6 269.2 323.2 278 C322.8 286.8 322.1 279.3 323.7 291 C325.3 302.7 324 301.9 328 313 C332 324.1 335.8 324.3 335.8 324.3 C335.8 324.3 337.7 324.1 342.4 313 C347.1 301.9 346.5 304.5 350 291 C353.5 277.5 352.8 272.4 352.8 272.4 L346.8 269 L344.6 251.5 L340 252 Z" fill="#323235" stroke="#050505" stroke-width="2.2"/>
<path d="M338 258 C338 258 331.8 255.3 328 266 C324.2 276.7 325.8 275.3 326.5 290 C327.2 304.7 327.2 300.7 330 310 C332.8 319.3 335 318 335 318 C335 318 334.3 312.7 334 300 C333.7 287.3 332.7 294 334 280 C335.3 266 338 258 338 258 Z" fill="#3c3c40"/>
<path d="M352.8 272.4 C352.8 272.4 353.5 277.5 350 291 C346.5 304.5 346.4 301.3 342.4 313 C338.4 324.7 338 326 338 326 C338 326 342.3 326.7 348 318 C353.7 309.3 351.7 312 355 300 C358.3 288 356 294.5 358 282 C360 269.5 361 262.5 361 262.5 L352.8 272.4 Z" fill="#232325" stroke="#050505" stroke-width="2"/>
<path d="M349 247 C349 247 353 247.3 362 242 C371 236.7 376 231 376 231 L370 250 L361 262 L348 267 L349 247 Z" fill="#2f2f32"/>
<path d="M344.6 251.5 L346.8 269 L361 262.5 L367.8 258" fill="none" stroke="#050505" stroke-width="2.6"/>
<path d="M339.7 245.3 L348 243" fill="none" stroke="#050505" stroke-width="2"/>
<!--beads--><!-- beads -->
<path d="M261 252 C266 250 276 250 283 253 C283 257 280 260 272 260 C265 260 261 257 261 252 Z" fill="#e01858" stroke="#050505" stroke-width="2.6"/>
<circle cx="267.5" cy="265.500" r="7.3" fill="#1f8a1f" stroke="#050505" stroke-width="3"/>
<circle cx="265" cy="263" r="1.8" fill="#e8ffe8"/>
<circle cx="265" cy="278.500" r="5" fill="#e6d820" stroke="#050505" stroke-width="2.800"/><circle cx="263.500" cy="277" r="1.200" fill="#fffbd0"/>

</g>
</svg>
</div>
<div class="panel" style="top:43.5px;height:109px"><h4>Bones</h4></div>
<div class="btn sel" style="top:69.2px"><svg viewBox="0 0 12 12"><circle cx="3.1" cy="8.9" r="2.1" fill="none" stroke="#fff" stroke-width="1.5"/><path d="M3.4 5.8 L11 0.8 L7.2 9 L5.6 6.8 Z" fill="#fff"/><path d="M1 1.200 L10.500 10.800" stroke="#fff" stroke-width="1.600"/></svg>Preview Pose</div>
<div class="btn" style="top:89.5px"><svg viewBox="0 0 12 12"><circle cx="3.1" cy="8.9" r="2.1" fill="none" stroke="#0c0c0c" stroke-width="1.5"/><path d="M3.4 5.8 L11 0.8 L7.2 9 L5.6 6.8 Z" fill="#0c0c0c"/><path d="M9 6.500 V12 M6.300 9.300 H11.800" stroke="#0c0c0c" stroke-width="1.200"/><path d="M9 5.800 L10.200 7.300 H7.800 Z M9 12.600 L10.200 11.100 H7.800 Z M5.600 9.300 L7.100 8.100 V10.500 Z M12.400 9.300 L10.900 8.100 V10.500 Z" fill="#0c0c0c"/></svg>Edit Bone</div>
<div class="btn" style="top:110px"><svg viewBox="0 0 12 12"><circle cx="3.1" cy="8.9" r="2.1" fill="none" stroke="#0c0c0c" stroke-width="1.5"/><path d="M3.4 5.8 L11 0.8 L7.2 9 L5.6 6.8 Z" fill="#0c0c0c"/><path d="M9.300 6.800 V12 M6.700 9.400 H11.900" stroke="#0c0c0c" stroke-width="1.500"/></svg>Create Bone</div>
<div class="btn" style="top:130.3px"><svg viewBox="0 0 12 12"><circle cx="3.1" cy="8.9" r="2.1" fill="none" stroke="#0c0c0c" stroke-width="1.5"/><path d="M3.4 5.8 L11 0.8 L7.2 9 L5.6 6.8 Z" fill="#0c0c0c"/><path d="M5.500 4 L11.500 11" stroke="#0c0c0c" stroke-width="1.500"/></svg>Split Bone</div>
<div class="panel" style="top:162.5px;height:129px"><h4>Geometry</h4></div>
<div class="btn" style="top:187.2px"><svg viewBox="0 0 12 12"><path d="M1.500 1.500 L10 10.500 M10.500 1.500 L2 10.500 M1 6 H4 M8 6 H11" stroke="#0c0c0c" stroke-width="1.300" stroke-dasharray="2.400 1" fill="none"/><circle cx="6" cy="6" r="1.700" fill="#0c0c0c"/><circle cx="10.300" cy="1.700" r="1.300" fill="#0c0c0c"/><circle cx="1.900" cy="10.400" r="1.300" fill="#0c0c0c"/><circle cx="1.700" cy="1.700" r="1.100" fill="#0c0c0c"/></svg>Auto Geometry</div>
<div class="btn" style="top:207.6px"><svg viewBox="0 0 12 12"><path d="M1.500 1.500 L10 10.500 M10.500 1.500 L2 10.500 M1 6 H11" stroke="#0c0c0c" stroke-width="1.400" fill="none"/><circle cx="6" cy="6" r="1.700" fill="#0c0c0c"/><circle cx="10.300" cy="1.700" r="1.300" fill="#0c0c0c"/><circle cx="1.900" cy="10.400" r="1.300" fill="#0c0c0c"/><circle cx="1.700" cy="1.700" r="1.100" fill="#0c0c0c"/></svg>Edit Geometry</div>
<div class="btn" style="top:227.9px"><svg viewBox="0 0 12 12"><circle cx="3.600" cy="3.500" r="2.400" fill="#0c0c0c"/><path d="M3.300 4 L1.500 11 M4 3 L10.500 0.800" stroke="#0c0c0c" stroke-width="1.200" fill="none"/><path d="M8.800 6.300 V12 M6 9.200 H11.700" stroke="#0c0c0c" stroke-width="1.400"/></svg>Create Vertex</div>
<div class="btn" style="top:248.3px"><svg viewBox="0 0 12 12"><path d="M2 10 C2 5 5 2 9.500 1.800" stroke="#0c0c0c" stroke-width="1.300" stroke-dasharray="2.200 1.200" fill="none"/><circle cx="9.700" cy="1.800" r="1.700" fill="#0c0c0c"/><circle cx="1.900" cy="10.300" r="1.700" fill="#0c0c0c"/><path d="M8.800 6.300 V12 M6 9.200 H11.700" stroke="#0c0c0c" stroke-width="1.400"/></svg>Create Edge</div>
<div class="btn" style="top:268.6px"><svg viewBox="0 0 12 12"><path d="M2 10.300 L9.700 1.800 M4.500 4.500 L10.500 10.500" stroke="#0c0c0c" stroke-width="1.400" fill="none"/><circle cx="9.700" cy="1.800" r="1.700" fill="#0c0c0c"/><circle cx="1.900" cy="10.300" r="1.700" fill="#0c0c0c"/></svg>Split Edge</div>
<div class="panel" style="top:299.3px;height:110px"><h4>Weights</h4></div>
<div class="btn" style="top:325.5px"><svg viewBox="0 0 12 12"><g fill="#0c0c0c"><rect x="0.500" y="0.500" width="2" height="2"/><rect x="5" y="0.500" width="2" height="2"/><rect x="9.500" y="0.500" width="2" height="2"/><rect x="0.500" y="5" width="2" height="2"/><rect x="9.500" y="5" width="2" height="2"/><rect x="0.500" y="9.500" width="2" height="2"/><rect x="5" y="9.500" width="2" height="2"/><rect x="9.500" y="9.500" width="2" height="2"/></g><path d="M1.500 1.500 L10.500 10.500" stroke="#0c0c0c" stroke-width="1.400"/></svg>Auto Weights</div>
<div class="btn" style="top:346px"><svg viewBox="0 0 12 12"><g fill="#0c0c0c"><rect x="0.500" y="0" width="2" height="2"/><rect x="5" y="0" width="2" height="2"/><rect x="9.500" y="0" width="2" height="2"/><rect x="0.500" y="3.600" width="2" height="2"/><rect x="5" y="3.600" width="2" height="2"/><rect x="9.500" y="3.600" width="2" height="2"/><rect x="0.500" y="7.200" width="2" height="2"/><rect x="5" y="7.200" width="2" height="2"/><rect x="9.500" y="7.200" width="2" height="2"/><rect x="0.500" y="10.800" width="3" height="1.200"/><rect x="5" y="10.500" width="2" height="1.800"/><rect x="8.500" y="10.800" width="3" height="1.200"/></g></svg>Weight Slider</div>
<div class="btn" style="top:366.4px"><svg viewBox="0 0 12 12"><g fill="#0c0c0c"><rect x="0.500" y="0.300" width="2" height="2"/><rect x="5" y="0.300" width="2" height="2"/><rect x="9.500" y="0.300" width="2" height="2"/><rect x="0.500" y="4.800" width="2" height="2"/><rect x="5" y="4.800" width="2" height="2"/><rect x="0.500" y="9.500" width="2" height="2"/></g><path d="M4.500 11 L12 3.500" stroke="#0c0c0c" stroke-width="1.700"/></svg>Weight Brush</div>
<div class="btn" style="top:386.9px"><svg viewBox="0 0 12 12"><circle cx="3.300" cy="8.300" r="2.300" fill="none" stroke="#0c0c0c" stroke-width="1.600"/><circle cx="9.300" cy="9.600" r="1.600" fill="none" stroke="#0c0c0c" stroke-width="1.400"/><path d="M0.500 2 L6.500 5.500 L11.500 1.500 M6.500 5.500 L5 7 M6.500 5.500 L9 8" stroke="#0c0c0c" stroke-width="1.500" fill="none"/></svg>Bone Influence</div>
<div class="red" style="left:6.2px;top:40.2px;width:126px;height:115.3px"></div>
<div class="red" style="left:6.2px;top:160.500px;width:126px;height:133px"></div>
<div class="red" style="left:6.2px;top:296.400px;width:126px;height:115.600px"></div>
<div class="badge" style="left:135.9px;top:84.9px;width:16.2px;height:16.2px;font-size:12px;line-height:16.7px">B</div>
<div class="badge" style="left:136.0px;top:219.0px;width:18.0px;height:18.0px;font-size:14.5px;line-height:18.5px">C</div>
<div class="badge" style="left:136.9px;top:336.9px;width:18.2px;height:18.2px;font-size:14.5px;line-height:18.7px">D</div>

</body></html>
